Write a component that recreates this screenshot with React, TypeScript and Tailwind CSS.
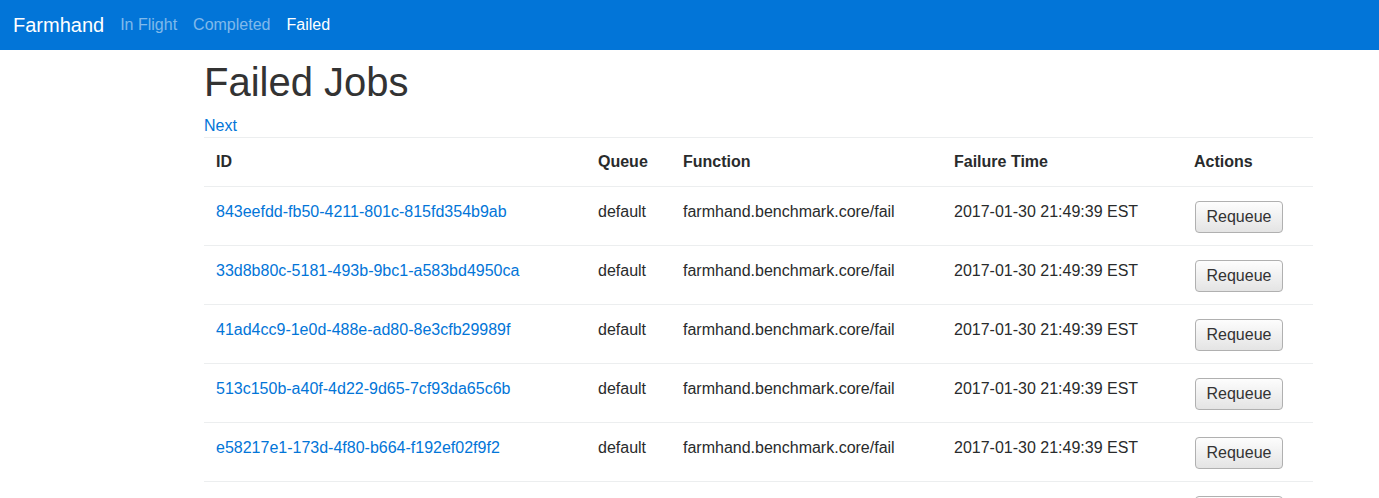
const jobs = [
  { id: "843eefdd-fb50-4211-801c-815fd354b9ab" },
  { id: "33d8b80c-5181-493b-9bc1-a583bd4950ca" },
  { id: "41ad4cc9-1e0d-488e-ad80-8e3cfb29989f" },
  { id: "513c150b-a40f-4d22-9d65-7cf93da65c6b" },
  { id: "e58217e1-173d-4f80-b664-f192ef02f9f2" },
  { id: "9a7f2c31-6b0e-4c8d-a1f3-2d5e8b7c4a10" },
];

export default function App() {
  return (
    <div className="min-h-screen bg-white text-[#292b2c] font-['Liberation_Sans',Arial,sans-serif] text-[16px] leading-[1.5]">
      <nav className="h-[50px] bg-[#0275d8] flex items-center pl-[13px] pb-px">
        <a className="text-white text-[20px] mr-[16px]" href="#">
          Farmhand
        </a>
        <div className="flex gap-[16px] text-[16px]">
          <a className="text-white/50" href="#">In Flight</a>
          <a className="text-white/50" href="#">Completed</a>
          <a className="text-white" href="#">Failed</a>
        </div>
      </nav>

      <div className="ml-[204px] w-[1109px]">
        <h1 className="pt-[10px] mb-[10px] text-[40px] leading-[1.1] font-medium text-[#333]">
          Failed Jobs
        </h1>
        <a className="text-[#0275d8] block leading-[23px]" href="#">
          Next
        </a>
        <table className="w-full border-collapse">
          <thead>
            <tr className="border-t border-b border-[#eceeef] text-left">
              <th className="w-[382px] p-[12px] font-bold align-top leading-[24px]">ID</th>
              <th className="w-[85px] p-[12px] font-bold align-top leading-[24px]">Queue</th>
              <th className="w-[271px] p-[12px] font-bold align-top leading-[24px]">Function</th>
              <th className="w-[240px] p-[12px] font-bold align-top leading-[24px]">Failure Time</th>
              <th className="w-[131px] p-[12px] font-bold align-top leading-[24px]">Actions</th>
            </tr>
          </thead>
          <tbody>
            {jobs.map((job) => (
              <tr key={job.id} className="border-b border-[#eceeef]">
                <td className="px-[12px] pt-[13px] pb-[11px] align-top leading-[23px]">
                  <a className="text-[#0275d8]" href="#">{job.id}</a>
                </td>
                <td className="px-[12px] pt-[13px] pb-[11px] align-top leading-[23px]">default</td>
                <td className="px-[12px] pt-[13px] pb-[11px] align-top leading-[23px]">farmhand.benchmark.core/fail</td>
                <td className="px-[12px] pt-[13px] pb-[11px] align-top leading-[23px]">2017-01-30 21:49:39 EST</td>
                <td className="pl-[13px] pr-[11px] pt-[14px] pb-[12px] align-top">
                  <button className="h-[32px] w-[88px] rounded-[4px] border border-[#b0b0b0] bg-gradient-to-b from-[#fdfdfd] to-[#e4e4e4] text-[#333] text-[16px] leading-none">
                    Requeue
                  </button>
                </td>
              </tr>
            ))}
          </tbody>
        </table>
      </div>
    </div>
  );
}
